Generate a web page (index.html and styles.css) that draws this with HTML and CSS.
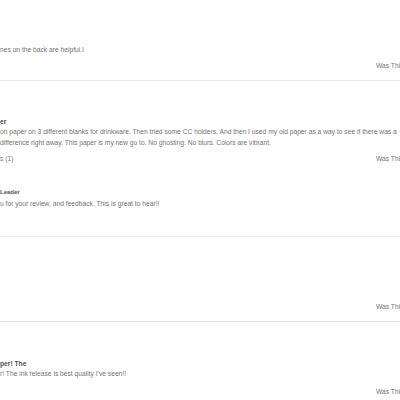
FILE: index.html
```html
<!DOCTYPE html>
<html>
<head>
<meta charset="utf-8">
<link rel="stylesheet" href="styles.css">
</head>
<body>
<div class="reviews">
  <section class="review first">
    <p class="text">nes on the back are helpful.l</p>
    <div class="helpful"><span class="count"></span><span class="was">Was This Review Helpful?</span></div>
  </section>
  <section class="review">
    <h3 class="title">er</h3>
    <p class="text">on paper on 3 different blanks for drinkware. Then tried some CC holders. And then I used my old paper as a way to see if there was a<br>difference right away. This paper is my new go to. No ghosting. No blurs. Colors are vibrant.</p>
    <div class="helpful"><span class="count">s (1)</span><span class="was">Was This Review Helpful?</span></div>
    <div class="reply">
      <h4 class="reply-name">Leader</h4>
      <p class="text">u for your review, and feedback. This is great to hear!!</p>
    </div>
  </section>
  <section class="review empty">
    <div class="helpful"><span class="count"></span><span class="was">Was This Review Helpful?</span></div>
  </section>
  <section class="review last">
    <h3 class="title">per! The</h3>
    <p class="text">r! The ink release is best quality I've seen!!</p>
    <div class="helpful"><span class="count"></span><span class="was">Was This Review Helpful?</span></div>
  </section>
</div>
</body>
</html>
```
FILE: styles.css
```css
html, body {
  margin: 0;
  padding: 0;
  background: #ffffff;
  overflow: hidden;
}
body {
  font-family: "Liberation Sans", Arial, sans-serif;
  font-size: 6.7px;
  color: #737373;
  width: 400px;
  height: 400px;
}
.reviews {
  width: 400px;
}
.review {
  border-bottom: 1px solid #e8e8e8;
  padding: 37px 0 9px 0;
}
.review.first {
  padding-top: 44px;
}
.review.empty {
  padding-top: 59px;
}
.review.last {
  padding-top: 38px;
}
.title {
  margin: 0;
  font-size: 6.7px;
  font-weight: bold;
  color: #4f4f4f;
  line-height: 8px;
}
.text {
  margin: 0;
  line-height: 11px;
  white-space: nowrap;
}
.review.last .text {
  margin-top: 0;
}
.review.last .helpful {
  margin-top: 7px;
}
.helpful {
  display: flex;
  margin-top: 5px;
  line-height: 11px;
}
.was {
  margin-left: auto;
  flex: none;
  width: 24px;
  min-width: 0;
  white-space: nowrap;
}
.reply {
  margin-top: 24px;
  padding-bottom: 18px;
}
.reply-name {
  margin: 0;
  font-size: 6px;
  font-weight: bold;
  color: #4f4f4f;
  line-height: 8px;
}
.reply .text {
  margin-top: 2px;
}
```
